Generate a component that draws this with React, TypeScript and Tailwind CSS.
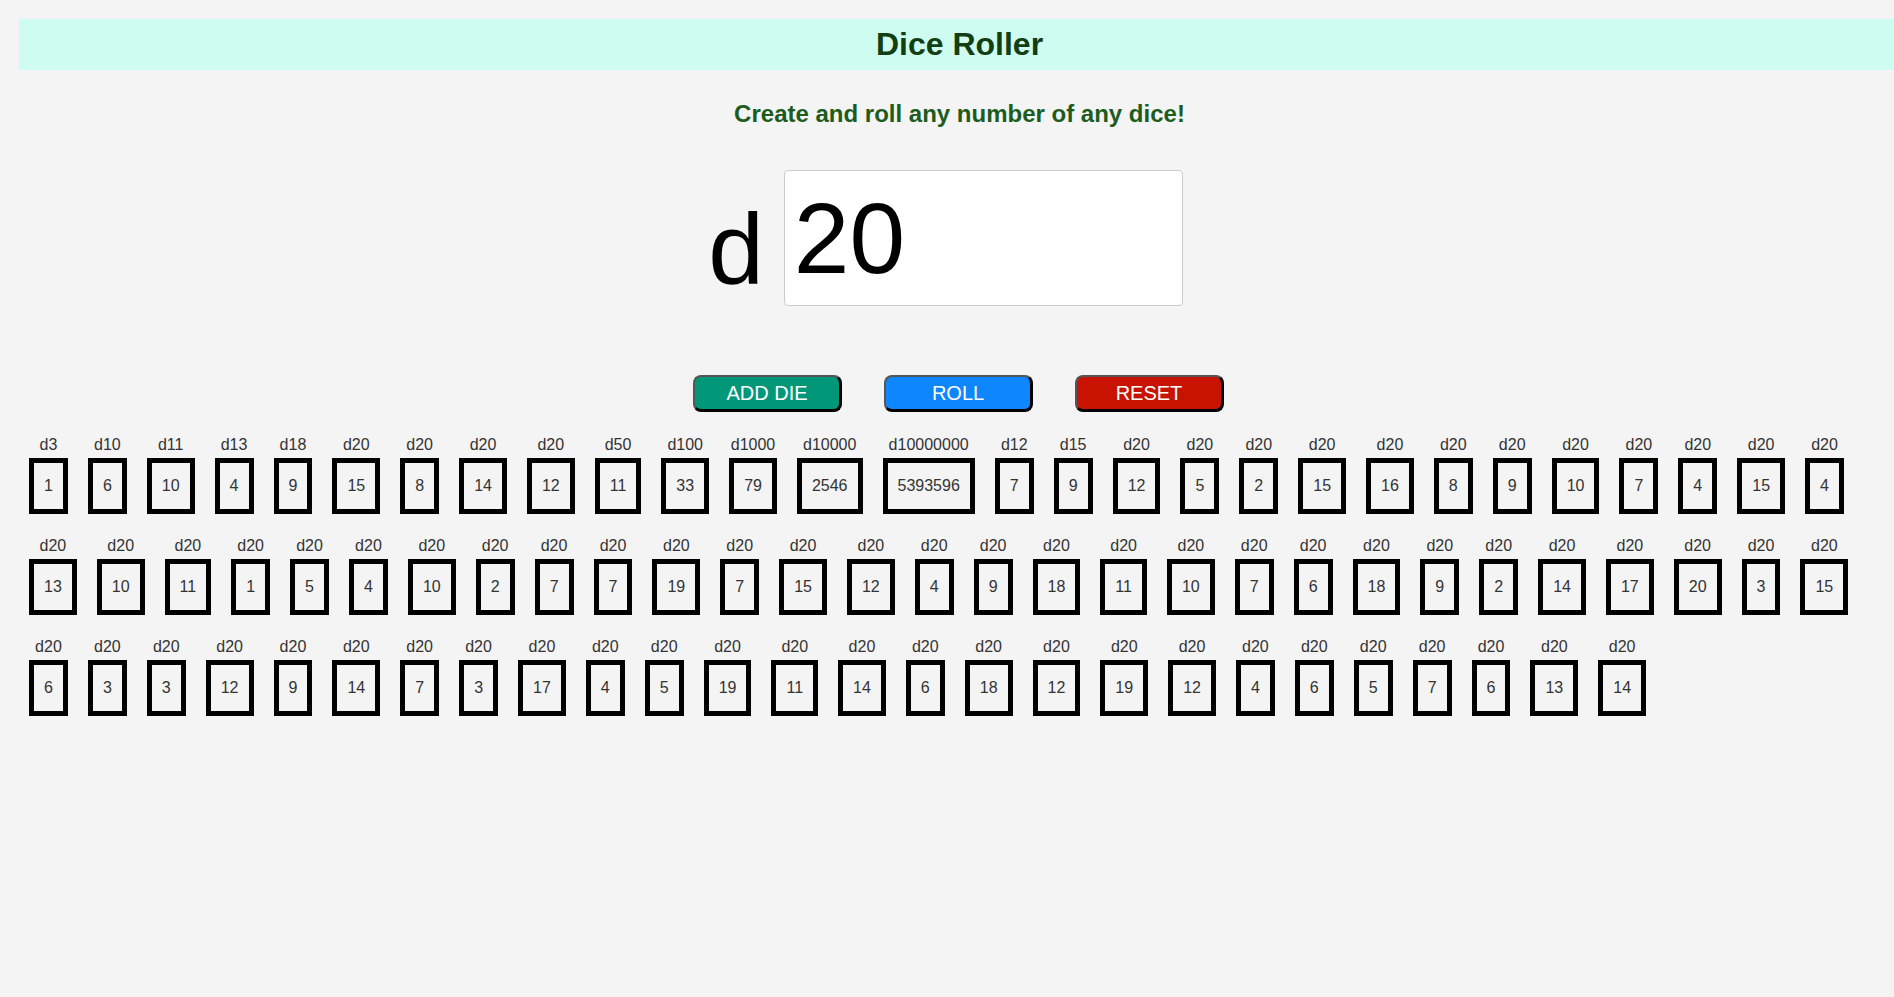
import React from "react";

type Die = { sides: string; value: number };

const row1: Die[] = [
  { sides: "d3", value: 1 },
  { sides: "d10", value: 6 },
  { sides: "d11", value: 10 },
  { sides: "d13", value: 4 },
  { sides: "d18", value: 9 },
  { sides: "d20", value: 15 },
  { sides: "d20", value: 8 },
  { sides: "d20", value: 14 },
  { sides: "d20", value: 12 },
  { sides: "d50", value: 11 },
  { sides: "d100", value: 33 },
  { sides: "d1000", value: 79 },
  { sides: "d10000", value: 2546 },
  { sides: "d10000000", value: 5393596 },
  { sides: "d12", value: 7 },
  { sides: "d15", value: 9 },
  ...[12, 5, 2, 15, 16, 8, 9, 10, 7, 4, 15, 4].map((v) => ({ sides: "d20", value: v })),
];

const row2 = [13, 10, 11, 1, 5, 4, 10, 2, 7, 7, 19, 7, 15, 12, 4, 9, 18, 11, 10, 7, 6, 18, 9, 2, 14, 17, 20, 3, 15].map(
  (v) => ({ sides: "d20", value: v })
);

const row3 = [6, 3, 3, 12, 9, 14, 7, 3, 17, 4, 5, 19, 11, 14, 6, 18, 12, 19, 12, 4, 6, 5, 7, 6, 13, 14].map((v) => ({
  sides: "d20",
  value: v,
}));

const dice: Die[] = [...row1, ...row2, ...row3];

export default function App() {
  return (
    <div
      className="min-h-screen w-full overflow-hidden bg-[#f4f4f4] pt-[19px]"
      style={{ fontFamily: '"Liberation Sans", Arial, sans-serif' }}
    >
      <div className="ml-[19px] w-[1881px]">
        <header className="flex h-[51px] items-center justify-center bg-[#cefcf0]">
          <h1 className="text-[32px] font-bold leading-[37px] text-[#133d13]">Dice Roller</h1>
        </header>

        <h2 className="mt-[30px] text-center text-[24px] font-bold leading-[28px] text-[#1c5c1c]">
          Create and roll any number of any dice!
        </h2>

        <div className="mt-[42px] flex items-end justify-center">
          <span className="mr-[20px] text-[100px] leading-[113px] text-black">d</span>
          <input
            type="text"
            defaultValue="20"
            className="mr-[28px] h-[136px] w-[399px] rounded-[4px] border border-[#cccccc] bg-white px-[9px] text-[100px] text-black outline-none"
            style={{ fontFamily: '"Liberation Sans", Arial, sans-serif' }}
          />
        </div>

        <div className="mt-[69px] flex justify-center gap-[42px] pr-[2px]">
          <button className="flex h-[37px] w-[149px] items-center justify-center rounded-[8px] border-l-2 border-t-2 border-r-[3px] border-b-[3px] border-l-[#555555] border-t-[#555555] border-r-black border-b-black bg-[#009879] text-[20px] text-white">
            ADD DIE
          </button>
          <button className="flex h-[37px] w-[149px] items-center justify-center rounded-[8px] border-l-2 border-t-2 border-r-[3px] border-b-[3px] border-l-[#555555] border-t-[#555555] border-r-black border-b-black bg-[#0e86fe] text-[20px] text-white">
            ROLL
          </button>
          <button className="flex h-[37px] w-[149px] items-center justify-center rounded-[8px] border-l-2 border-t-2 border-r-[3px] border-b-[3px] border-l-[#555555] border-t-[#555555] border-r-black border-b-black bg-[#c71300] text-[20px] text-white">
            RESET
          </button>
        </div>

        <div className="mt-[24px] flex flex-wrap gap-x-[20px] gap-y-[23px] px-[10px]">
          {dice.map((d, i) => (
            <div key={i} className="flex flex-col items-center">
              <span className="text-[16px] leading-[18px] text-[#333333]">{d.sides}</span>
              <div className="mt-[4px] border-[5px] border-black px-[10px] py-[14px] text-[16px] leading-[18px] text-[#333333]">
                {d.value}
              </div>
            </div>
          ))}
        </div>
      </div>
    </div>
  );
}
